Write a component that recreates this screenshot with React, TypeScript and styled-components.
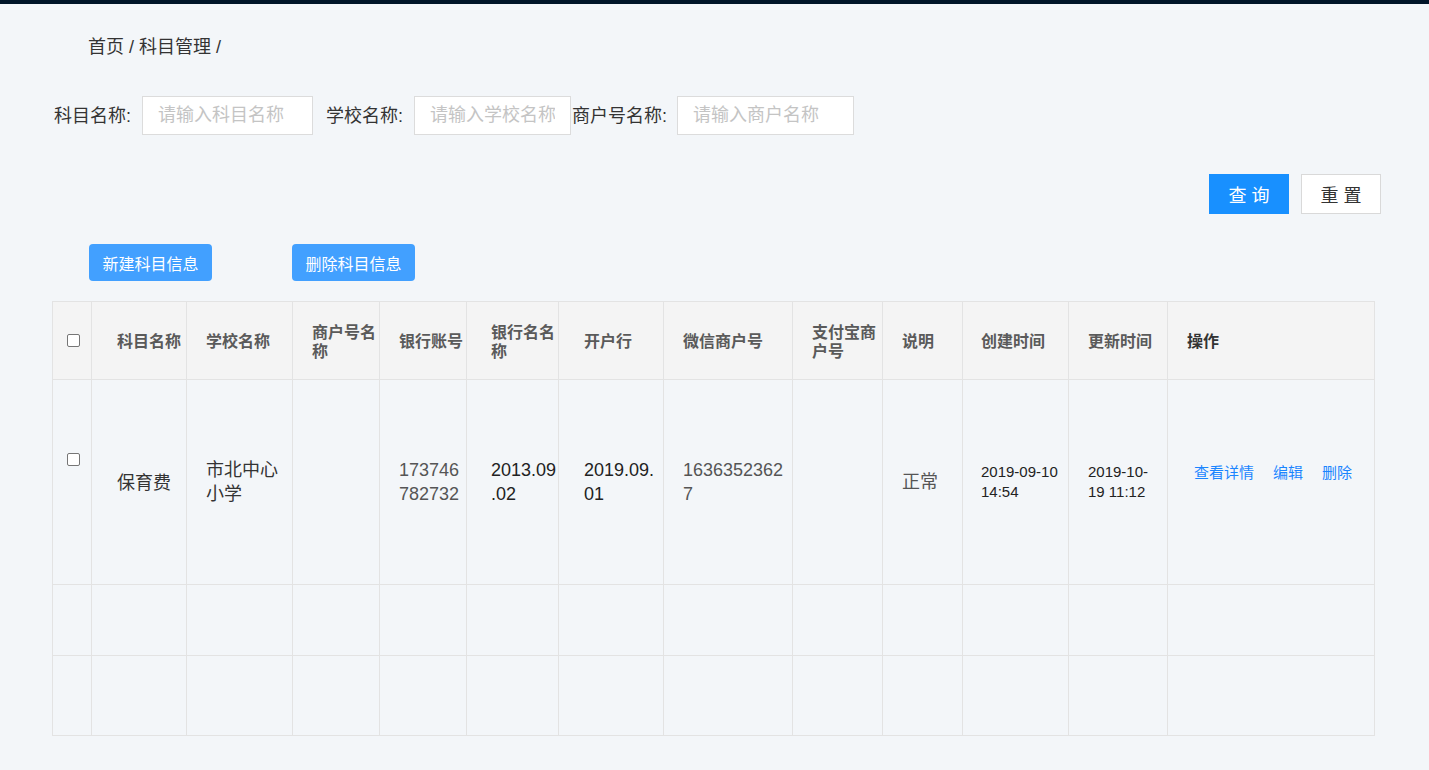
import React from 'react';
import styled, { createGlobalStyle } from 'styled-components';

const GlobalStyle = createGlobalStyle`
  html, body {
    margin: 0;
    padding: 0;
    background: #f3f6f9;
  }
  body {
    font-family: "Liberation Sans", "Noto Sans CJK SC", sans-serif;
    color: #333;
  }
`;

const TopBar = styled.div`
  height: 4px;
  background: #001529;
`;

const Page = styled.div`
  padding: 0 0 40px 52px;
`;

const Breadcrumb = styled.div`
  padding: 31px 0 0 36px;
  font-size: 18px;
  line-height: 24px;
  color: #333;
`;

const FilterRow = styled.div`
  margin-top: 37px;
  padding-left: 2px;
  display: flex;
  align-items: center;
  height: 39px;
`;

const FilterLabel = styled.span<{ $gap?: number }>`
  font-size: 18px;
  line-height: 24px;
  color: #333;
  margin-right: ${p => p.$gap ?? 11}px;
  white-space: nowrap;
`;

const FilterInput = styled.input<{ $w: number; $gap: number }>`
  box-sizing: border-box;
  width: ${p => p.$w}px;
  height: 39px;
  margin-right: ${p => p.$gap}px;
  padding: 0 15px;
  border: 1px solid #dcdcdc;
  background: #fff;
  font-family: "Liberation Sans", "Noto Sans CJK SC", sans-serif;
  font-size: 18px;
  color: #333;
  outline: none;

  &::placeholder {
    color: #c4c4c4;
  }
`;

const QueryBar = styled.div`
  margin-top: 39px;
  padding-right: 48px;
  display: flex;
  justify-content: flex-end;
  gap: 12px;
`;

const QueryButton = styled.button<{ $primary?: boolean }>`
  box-sizing: border-box;
  width: 80px;
  height: 40px;
  border: 1px solid ${p => (p.$primary ? '#1890ff' : '#d9d9d9')};
  background: ${p => (p.$primary ? '#1890ff' : '#fff')};
  color: ${p => (p.$primary ? '#fff' : '#333')};
  font-family: "Noto Sans CJK SC", sans-serif;
  font-size: 18px;
  letter-spacing: 5px;
  padding: 0 0 0 5px;
  cursor: pointer;
`;

const ActionBar = styled.div`
  margin-top: 30px;
  padding-left: 37px;
  display: flex;
  gap: 80px;
`;

const ActionButton = styled.button`
  box-sizing: border-box;
  width: 123px;
  height: 37px;
  border: none;
  border-radius: 4px;
  background: #42a0ff;
  color: #fff;
  font-family: "Noto Sans CJK SC", sans-serif;
  font-size: 16px;
  cursor: pointer;
`;

const Table = styled.table`
  margin-top: 20px;
  width: 1322px;
  table-layout: fixed;
  border-collapse: collapse;
  border: 1px solid #e3e3e3;
`;

const Row = styled.tr<{ $h: number; $head?: boolean }>`
  height: ${p => p.$h}px;
  background: ${p => (p.$head ? '#f4f4f4' : 'transparent')};
`;

const HeadCell = styled.th<{ $pl: number; $dark?: boolean }>`
  border: 1px solid #e3e3e3;
  padding: 0 2px 0 ${p => p.$pl}px;
  text-align: left;
  vertical-align: middle;
  font-family: "Noto Sans CJK SC", sans-serif;
  font-size: 16px;
  line-height: 19px;
  font-weight: 700;
  color: ${p => (p.$dark ? '#333' : '#5a5a5a')};
`;

const Cell = styled.td<{ $pl: number; $pr?: number; $color?: string; $small?: boolean }>`
  border: 1px solid #e3e3e3;
  padding: 0 ${p => p.$pr ?? 6}px 0 ${p => p.$pl}px;
  vertical-align: middle;
  font-size: ${p => (p.$small ? 15 : 18)}px;
  line-height: ${p => (p.$small ? 20 : 24)}px;
  color: ${p => p.$color ?? '#333'};
  overflow-wrap: anywhere;
`;

const Check = styled.input<{ $lift?: number }>`
  appearance: none;
  display: block;
  box-sizing: border-box;
  width: 13px;
  height: 13px;
  margin: 0 0 ${p => p.$lift ?? 0}px 0;
  border: 1px solid #767676;
  border-radius: 2px;
  background: #fff;
`;

const Links = styled.div`
  display: flex;
  gap: 19px;
  margin-bottom: 20px;
`;

const LinkText = styled.a`
  font-family: "Noto Sans CJK SC", sans-serif;
  font-size: 15px;
  line-height: 20px;
  color: #1a85ff;
  cursor: pointer;
`;

const columns = [
  { w: 39, pl: 14, title: '' },
  { w: 95, pl: 25, title: '科目名称' },
  { w: 106, pl: 19, title: '学校名称' },
  { w: 87, pl: 19, title: '商户号名称' },
  { w: 87, pl: 19, title: '银行账号' },
  { w: 92, pl: 24, title: '银行名名称' },
  { w: 105, pl: 25, title: '开户行' },
  { w: 129, pl: 19, title: '微信商户号' },
  { w: 90, pl: 19, title: '支付宝商户号' },
  { w: 80, pl: 19, title: '说明' },
  { w: 106, pl: 18, title: '创建时间' },
  { w: 99, pl: 19, title: '更新时间' },
  { w: 207, pl: 19, title: '操作' },
];

const emptyRows = [71, 80];

const App = () => {
  return (
    <>
      <GlobalStyle />
      <TopBar />
      <Page>
        <Breadcrumb>首页 / 科目管理 /</Breadcrumb>

        <FilterRow>
          <FilterLabel>科目名称:</FilterLabel>
          <FilterInput $w={171} $gap={13} placeholder="请输入科目名称" />
          <FilterLabel>学校名称:</FilterLabel>
          <FilterInput $w={157} $gap={1} placeholder="请输入学校名称" />
          <FilterLabel $gap={10}>商户号名称:</FilterLabel>
          <FilterInput $w={177} $gap={0} placeholder="请输入商户名称" />
        </FilterRow>

        <QueryBar>
          <QueryButton $primary>查询</QueryButton>
          <QueryButton>重置</QueryButton>
        </QueryBar>

        <ActionBar>
          <ActionButton>新建科目信息</ActionButton>
          <ActionButton>删除科目信息</ActionButton>
        </ActionBar>

        <Table>
          <colgroup>
            {columns.map((c, i) => (
              <col key={i} style={{ width: c.w }} />
            ))}
          </colgroup>
          <thead>
            <Row $h={78} $head>
              {columns.map((c, i) => (
                <HeadCell key={i} $pl={c.pl} $dark={i === columns.length - 1}>
                  {i === 0 ? <Check type="checkbox" /> : c.title}
                </HeadCell>
              ))}
            </Row>
          </thead>
          <tbody>
            <Row $h={205}>
              <Cell $pl={14}>
                <Check type="checkbox" $lift={46} />
              </Cell>
              <Cell $pl={25}>
                <span style={{ fontFamily: '"Noto Sans CJK SC", sans-serif' }}>保育费</span>
              </Cell>
              <Cell $pl={19}>市北中心小学</Cell>
              <Cell $pl={19} />
              <Cell $pl={19} $pr={4} $color="#555">173746782732</Cell>
              <Cell $pl={24} $pr={0} $color="#222">2013.09.02</Cell>
              <Cell $pl={25} $pr={6} $color="#222">2019.09.01</Cell>
              <Cell $pl={19} $color="#555">16363523627</Cell>
              <Cell $pl={19} />
              <Cell $pl={19} $color="#555">正常</Cell>
              <Cell $pl={18} $small $color="#222">2019-09-10 14:54</Cell>
              <Cell $pl={19} $pr={8} $small $color="#222">2019-10-19 11:12</Cell>
              <Cell $pl={26}>
                <Links>
                  <LinkText>查看详情</LinkText>
                  <LinkText>编辑</LinkText>
                  <LinkText>删除</LinkText>
                </Links>
              </Cell>
            </Row>
            {emptyRows.map((h, r) => (
              <Row key={r} $h={h}>
                {columns.map((c, i) => (
                  <Cell key={i} $pl={c.pl} />
                ))}
              </Row>
            ))}
          </tbody>
        </Table>
      </Page>
    </>
  );
};

export default App;
